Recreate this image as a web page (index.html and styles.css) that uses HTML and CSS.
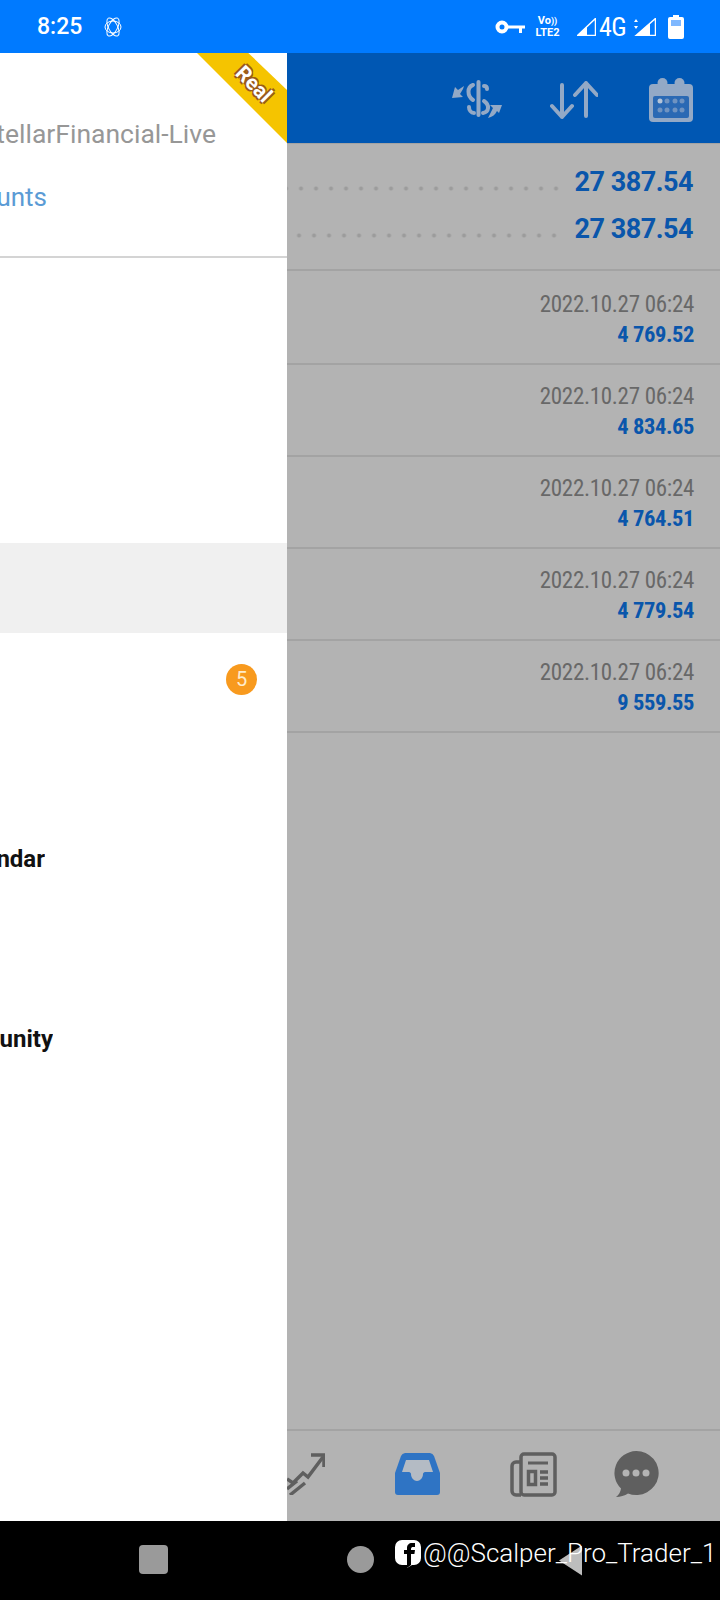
FILE: index.html
```html
<!DOCTYPE html>
<html lang="en">
<head>
  <meta charset="UTF-8">
  <title>History</title>
  <meta name="viewport" content="width=device-width, initial-scale=1.0">
  <link rel="stylesheet" href="styles.css">
</head>
<body>
  <div class="status-bar">
    <span class="clock">8:25</span>
    <svg class="atom" viewBox="0 0 18 22" fill="none" stroke="#fff" stroke-width="1">
      <ellipse cx="9" cy="11" rx="4.500" ry="10" transform="rotate(-28 9 11)"/>
      <ellipse cx="9" cy="11" rx="4.500" ry="10" transform="rotate(28 9 11)"/>
      <ellipse cx="9" cy="11" rx="8" ry="6"/>
    </svg>
    <div class="status-icons">
      <svg class="key" viewBox="0 0 30 14">
        <circle cx="7" cy="7" r="4.500" fill="none" stroke="#fff" stroke-width="4"/>
        <path d="M12 5.500h18v3h-3v4.500h-3v-4.500h-12z" fill="#fff"/>
      </svg>
      <div class="volte"><span>Vo<small>))</small></span><span>LTE2</span></div>
      <svg class="signal" viewBox="0 0 19 18">
        <path d="M0.500 17.500L18.500 0.500V17.500Z" fill="none" stroke="#fff" stroke-width="1.500"/>
        <path d="M0.500 17.500L10 8.500V17.500Z" fill="#fff"/>
      </svg>
      <span class="net">4G</span>
      <svg class="signal-two" viewBox="0 0 23 18">
        <path d="M1 4l2-3 2 3zM1 8l2 3 2-3z" fill="#fff"/>
        <path d="M3 17.500L22.500 0.500V17.500Z" fill="none" stroke="#fff" stroke-width="1.500"/>
        <path d="M3 17.500L17 5V17.500Z" fill="#fff"/>
      </svg>
      <svg class="battery" viewBox="0 0 16 24">
        <path d="M5 0h6v2h3a2 2 0 0 1 2 2v18a2 2 0 0 1-2 2H2a2 2 0 0 1-2-2V4a2 2 0 0 1 2-2h3z" fill="#fff"/>
        <rect x="3" y="5" width="10" height="6" fill="#7fb8ff"/>
      </svg>
    </div>
  </div>

  <div class="main">
    <div class="app">
      <div class="app-bar">
        <svg class="icon-money" viewBox="0 0 50 40" fill="#93a9c6" stroke="#93a9c6">
          <rect x="24.500" y="0" width="4" height="37" rx="2" stroke="none"/>
          <g fill="none" stroke-width="4" stroke-linecap="round">
            <path d="M21 5C15 7 15 16 21 20"/>
            <path d="M32 6c2 0 3 1 3 3"/>
            <path d="M32 21c6 4 5 11-1 12"/>
            <path d="M17 27c0 3 2 6 5 6"/>
          </g>
          <path d="M0 18l3-11 3 3 6-4-1 3-3 5 3 3z" stroke="none"/>
          <path d="M50 25l-12 0 3 3-5 10c4-1 7-3 9-7l2 2z" stroke="none"/>
        </svg>
        <svg class="icon-sort" viewBox="0 0 48 40" fill="none" stroke="#93a9c6" stroke-width="4" stroke-linecap="round" stroke-linejoin="round">
          <path d="M12 5v32M2 26l10 11 10-11"/>
          <path d="M36 36V3M25 15L36 3l11 12"/>
        </svg>
        <svg class="icon-calendar" viewBox="0 0 44 44">
          <rect x="0" y="6" width="44" height="38" rx="4" fill="#93a9c6"/>
          <circle cx="13.500" cy="5" r="5" fill="#93a9c6"/>
          <circle cx="30.500" cy="5" r="5" fill="#93a9c6"/>
          <rect x="4" y="18" width="36" height="22" rx="2" fill="#2a69b4"/>
          <g fill="#6f93c1">
            <circle cx="11" cy="23" r="2.500" fill="#b4c4d8"/><circle cx="18" cy="23" r="2.500"/><circle cx="26" cy="23" r="2.500"/><circle cx="33" cy="23" r="2.500"/>
            <circle cx="11" cy="32" r="2.500"/><circle cx="18" cy="32" r="2.500"/><circle cx="26" cy="32" r="2.500"/><circle cx="33" cy="32" r="2.500"/>
          </g>
        </svg>
      </div>

      <div class="summary">
        <div class="summary-row"><div class="dots"></div><span class="total">27 387.54</span></div>
        <div class="summary-row"><div class="dots dots-short"></div><span class="total">27 387.54</span></div>
      </div>

      <div class="deal"><span class="deal-date">2022.10.27 06:24</span><span class="deal-amount">4 769.52</span></div>
      <div class="deal"><span class="deal-date">2022.10.27 06:24</span><span class="deal-amount">4 834.65</span></div>
      <div class="deal"><span class="deal-date">2022.10.27 06:24</span><span class="deal-amount">4 764.51</span></div>
      <div class="deal"><span class="deal-date">2022.10.27 06:24</span><span class="deal-amount">4 779.54</span></div>
      <div class="deal"><span class="deal-date">2022.10.27 06:24</span><span class="deal-amount">9 559.55</span></div>

      <div class="tab-bar">
        <svg class="tab-chart" viewBox="0 0 38 42" fill="none" stroke="#5f5f5f" stroke-width="3.500">
          <path d="M0 26l6 4 10-10 5 4 15-20"/>
          <path d="M24 2l13 0 0 12"/>
          <path d="M0 36l10-8M3 42l15-12"/>
        </svg>
        <svg class="tab-inbox" viewBox="0 0 45 42">
          <path d="M10 0h25a5 5 0 0 1 4 3l6 17v19a3 3 0 0 1-3 3H3a3 3 0 0 1-3-3V20l6-17a5 5 0 0 1 4-3z" fill="#2f74c4"/>
          <path d="M11 7h23l4 12h-8c-1 0-2 1-2 2 0 4-3 7-6 7s-6-3-6-7c0-1-1-2-2-2H7z" fill="#b4bbc4"/>
        </svg>
        <svg class="tab-news" viewBox="0 0 47 45" fill="none" stroke="#5f5f5f" stroke-width="3.500">
          <rect x="11" y="2" width="34" height="41" rx="3"/>
          <path d="M11 43H6a4 4 0 0 1-4-4V14a4 4 0 0 1 4-4h5"/>
          <path d="M18 11h20" stroke-width="3"/>
          <rect x="18.500" y="19.500" width="7" height="13"/>
          <path d="M30 20h8M30 26h8M30 32h8"/>
        </svg>
        <svg class="tab-chat" viewBox="0 0 46 46">
          <path d="M23 0a22.500 22 0 1 1-8 42.500c-3 2-8 3.500-12 3.500 3-2 4.500-5 5-8.500A22.500 22 0 0 1 23 0z" fill="#5f5f5f"/>
          <circle cx="13" cy="22" r="3.500" fill="#b3b3b3"/>
          <circle cx="23" cy="22" r="3.500" fill="#b3b3b3"/>
          <circle cx="33" cy="22" r="3.500" fill="#b3b3b3"/>
        </svg>
      </div>
    </div>

    <div class="drawer">
      <div class="drawer-head">
        <div class="ribbon"><span>Real</span></div>
        <div class="server">StellarFinancial-Live</div>
        <div class="manage"><span>Manage accounts</span></div>
      </div>
      <div class="menu">
        <div class="menu-item"></div>
        <div class="menu-item"></div>
        <div class="menu-item"></div>
        <div class="menu-item selected"></div>
        <div class="menu-item"><span class="badge">5</span></div>
        <div class="menu-item"></div>
        <div class="menu-item"><div class="menu-label"><span>Economic calendar</span></div></div>
        <div class="menu-item"></div>
        <div class="menu-item"><div class="menu-label label-wide"><span>Community</span></div></div>
      </div>
    </div>
  </div>

  <div class="nav-bar">
    <div class="nav-square"></div>
    <div class="nav-circle"></div>
    <div class="nav-back"></div>
    <div class="watermark">
      <svg class="fb" viewBox="0 0 26 28">
        <path d="M7 0h12a7 7 0 0 1 7 7v11a7 7 0 0 1-7 7h-2l-5 3v-3H7a7 7 0 0 1-7-7V7a7 7 0 0 1 7-7z" fill="#fff"/>
        <path d="M12 28V14H9v-4h3V8c0-3 2-5 5-5h3v4h-2c-1 0-2 .5-2 2v1h4l-.6 4H16v11z" fill="#000"/>
      </svg>
      <span class="watermark-text">@@Scalper_Pro_Trader_1</span>
    </div>
  </div>
</body>
</html>
```

FILE: styles.css
```css
* {
  box-sizing: border-box;
}
body {
  font-family: Roboto, "Liberation Sans", sans-serif;
  margin: 0;
  width: 720px;
  height: 1600px;
  display: flex;
  flex-direction: column;
  overflow: hidden;
  background-color: #000;
}
.status-bar {
  height: 53px;
  background-color: #007aff;
  color: white;
  display: flex;
  align-items: center;
  padding: 0 36px 0 37px;
}
.clock {
  font-size: 23px;
  font-weight: 500;
}
.atom {
  width: 18px;
  height: 22px;
  margin-left: 22px;
}
.status-icons {
  margin-left: auto;
  display: flex;
  align-items: center;
}
.key {
  width: 30px;
  height: 14px;
}
.volte {
  display: flex;
  flex-direction: column;
  align-items: center;
  margin-left: 9px;
  font-size: 11px;
  font-weight: 700;
  line-height: 12px;
  width: 27px;
}
.volte small {
  font-size: 9px;
}
.signal {
  width: 19px;
  height: 18px;
  margin-left: 16px;
}
.net {
  font-size: 26px;
  font-weight: 400;
  font-stretch: 75%;
  letter-spacing: -0.500px;
  margin-left: 3px;
  width: 30px;
}
.signal-two {
  width: 23px;
  height: 18px;
  margin-left: 4px;
}
.battery {
  width: 16px;
  height: 24px;
  margin-left: 12px;
}
.main {
  flex: 1;
  position: relative;
  overflow: hidden;
  background-color: #b3b3b3;
}
.app {
  height: 100%;
  display: flex;
  flex-direction: column;
}
.app-bar {
  height: 90px;
  background-color: #0057b3;
  flex-shrink: 0;
  display: flex;
  align-items: center;
  justify-content: flex-end;
  padding-right: 27px;
}
.icon-money {
  width: 50px;
  height: 40px;
  margin-right: 48px;
  margin-top: 4px;
}
.icon-sort {
  width: 48px;
  height: 40px;
  margin-right: 51px;
  margin-top: 4px;
}
.icon-calendar {
  width: 44px;
  height: 44px;
  margin-top: 4px;
}
.summary {
  height: 128px;
  padding: 14px 27px 0 270px;
  border-top: 1px solid #a3a3a3;
  border-bottom: 2px solid #a3a3a3;
}
.summary-row {
  height: 47px;
  display: flex;
  align-items: center;
  gap: 11px;
}
.dots {
  flex: 1;
  height: 5px;
  margin-top: 14px;
  background-image: radial-gradient(circle, #9c9c9c 1.500px, transparent 2.500px);
  background-size: 15px 5px;
  background-position: right center;
}
.dots-short {
  margin-right: 2px;
}
.total {
  color: #0a56ab;
  font-size: 27px;
  font-weight: 700;
  letter-spacing: -0.500px;
}
.deal {
  height: 92px;
  padding: 18px 26px 0 0;
  display: flex;
  flex-direction: column;
  align-items: flex-end;
  border-bottom: 2px solid #a3a3a3;
}
.summary + .deal {
  height: 94px;
  padding-top: 20px;
}
.deal-date {
  color: #686868;
  font-size: 23px;
  font-stretch: 75%;
  line-height: 27px;
  letter-spacing: -0.300px;
}
.deal-amount {
  color: #0a56ab;
  font-size: 22.500px;
  font-weight: 700;
  font-stretch: 75%;
  line-height: 33px;
  letter-spacing: -0.400px;
}
.tab-bar {
  margin-top: auto;
  height: 92px;
  border-top: 2px solid #a3a3a3;
  display: flex;
  align-items: center;
  justify-content: flex-end;
  padding: 0 61px 4px 0;
}
.tab-chart {
  width: 38px;
  height: 42px;
  margin-right: 70px;
}
.tab-inbox {
  width: 45px;
  height: 42px;
  margin-right: 70px;
}
.tab-news {
  width: 47px;
  height: 45px;
  margin-right: 56px;
}
.tab-chat {
  width: 46px;
  height: 46px;
}
.drawer {
  position: absolute;
  top: 0;
  left: 0;
  bottom: 0;
  width: 287px;
  background-color: white;
  overflow: hidden;
}
.drawer-head {
  height: 205px;
  position: relative;
  border-bottom: 2px solid #d4d4d4;
}
.ribbon {
  position: absolute;
  top: 0;
  right: 0;
  width: 90px;
  height: 90px;
  background-color: #f5c400;
  clip-path: polygon(0 0, 57% 0, 100% 41%, 100% 100%);
}
.ribbon span {
  position: absolute;
  top: 19px;
  left: 36px;
  transform: rotate(45deg);
  color: white;
  font-size: 21px;
  font-weight: 700;
  text-shadow: -2px 0 #9a5a1a, 2px 0 #9a5a1a, 0 -2px #9a5a1a, 0 2px #9a5a1a;
}
.server, .manage, .menu-label {
  display: flex;
  justify-content: flex-end;
  white-space: nowrap;
  overflow: hidden;
}
.server {
  position: absolute;
  top: 65px;
  left: 0;
  width: 216px;
  color: #979797;
  font-size: 26.500px;
}
.manage {
  position: absolute;
  top: 129px;
  left: 0;
  width: 47px;
  color: #5b9bd5;
  font-size: 26px;
}
.menu {
  padding-top: 15px;
}
.menu-item {
  height: 90px;
  display: flex;
  align-items: center;
  justify-content: flex-end;
  position: relative;
}
.menu-item.selected {
  background-color: #f0f0f0;
}
.menu-label {
  position: absolute;
  left: 0;
  top: 32px;
  width: 45px;
  color: #111;
  font-size: 24px;
  font-weight: 700;
}
.label-wide {
  width: 53px;
}
.badge {
  width: 31px;
  height: 31px;
  margin: 2px 30px 0 0;
  border-radius: 50%;
  background-color: #f89a1e;
  color: #ffeccb;
  font-size: 20px;
  line-height: 31px;
  text-align: center;
}
.nav-bar {
  height: 79px;
  background-color: #000;
  position: relative;
  display: flex;
  align-items: center;
  padding: 0 0 2px 139px;
}
.nav-square {
  width: 29px;
  height: 29px;
  border-radius: 4px;
  background-color: #9a9a9a;
}
.nav-circle {
  width: 27px;
  height: 27px;
  border-radius: 50%;
  background-color: #9a9a9a;
  margin-left: 179px;
}
.nav-back {
  width: 23px;
  height: 30px;
  margin: 2px 0 0 185px;
  background-color: #bdbdbd;
  clip-path: polygon(100% 0, 0 50%, 100% 100%);
}
.watermark {
  position: absolute;
  top: 19px;
  left: 395px;
  display: flex;
  align-items: flex-start;
  gap: 2px;
  color: white;
  font-weight: 300;
  font-size: 26px;
  white-space: nowrap;
}
.watermark-text {
  margin-top: -2px;
}
.fb {
  width: 26px;
  height: 28px;
}
```
